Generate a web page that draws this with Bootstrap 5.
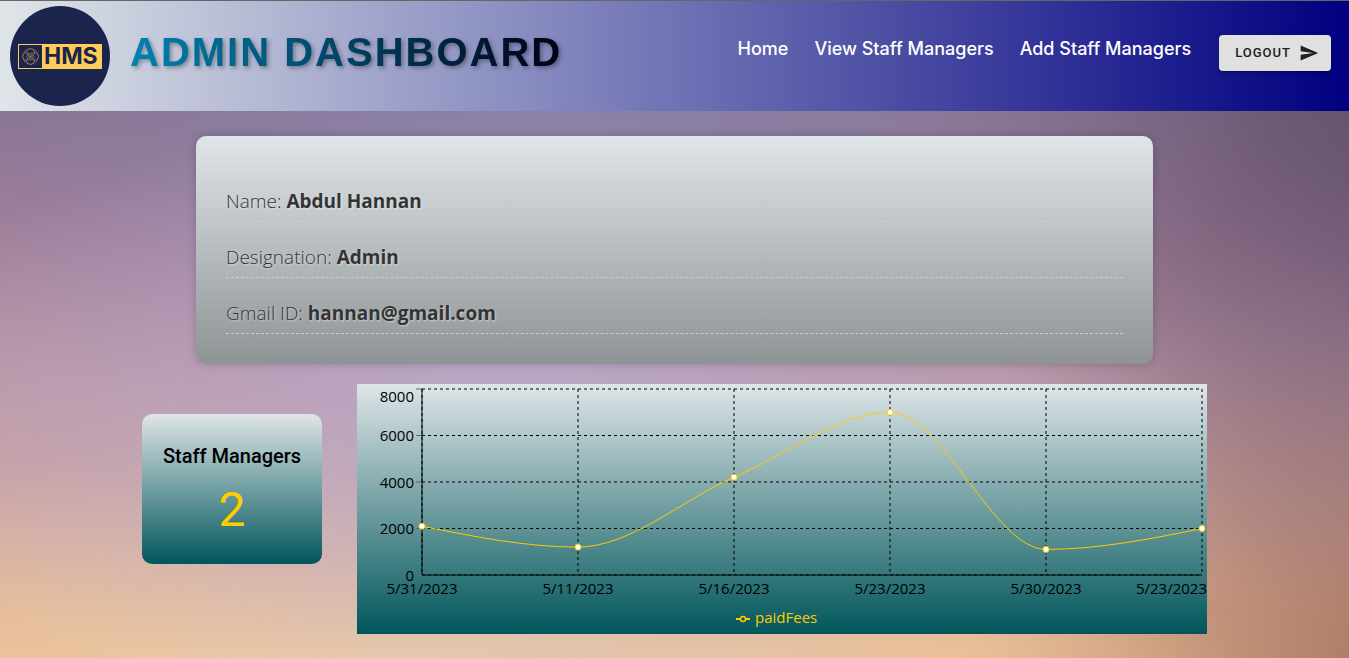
<!DOCTYPE html>
<html lang="en">
<head>
<meta charset="utf-8">
<meta name="viewport" content="width=device-width, initial-scale=1">
<title>Admin Dashboard</title>
<link href="https://cdn.jsdelivr.net/npm/bootstrap@5.3.0/dist/css/bootstrap.min.css" rel="stylesheet">
<style>
  body {
    min-height: 100vh;
    font-family: "Open Sans", "Noto Sans", sans-serif;
    background:
      radial-gradient(ellipse 50% 45% at 38% 62%, #bba9c6 0%, #bba9c600 100%),
      radial-gradient(ellipse 60% 40% at 33% 106%, #eccdaa 10%, #eccdaa00 100%),
      radial-gradient(ellipse 55% 60% at 40% 10%, #8b82ab 0%, #8b82ab00 100%),
      radial-gradient(ellipse 36% 80% at 104% 14%, #62506b 0%, #62506b00 100%),
      radial-gradient(ellipse 32% 55% at 104% 100%, #a87767 0%, #a8776700 100%),
      linear-gradient(#87708b 15%, #a78199 38%, #be98a5 60%, #d5ab9f 82%, #e8b78c 100%);
  }
  .topbar {
    height: 111px;
    border-top: 1px solid #666;
    background: linear-gradient(to right, #dfe5e8, #000080);
  }
  .brand { margin: 5px 20px 0 10px; }
  .site-title {
    margin: 27px 0 0;
    font: 700 40px/48px "Liberation Sans", Arial, sans-serif;
    letter-spacing: 2px;
    background: linear-gradient(to right, #0083b0, #000014);
    -webkit-background-clip: text;
    background-clip: text;
    color: transparent;
    filter: drop-shadow(2px 2px 2px rgba(0, 0, 0, .35));
  }
  .topbar .nav { margin-top: 36px; }
  .topbar .nav-link { font: 500 18px/24px Inter, sans-serif; color: #fff; padding: 0 13px; }
  .btn-logout {
    --bs-btn-bg: #e0e0e0; --bs-btn-hover-bg: #d5d5d5; --bs-btn-color: #202020;
    margin: 34px 18px 0 15px;
    padding: 0 12px 0 16px;
    font: 500 13px/24px Roboto, sans-serif;
    letter-spacing: 1px;
    height: 36px;
    border: 0;
    border-radius: 4px;
    box-shadow: 0 3px 1px -2px rgba(0,0,0,.2), 0 2px 2px rgba(0,0,0,.14), 0 1px 5px rgba(0,0,0,.12);
  }
  .profile {
    max-width: 957px;
    margin-top: 25px;
    padding: 48px 30px 30px;
    border-radius: 10px;
    background: linear-gradient(#dfe5e8, #8e9395);
    box-shadow: 0 0 10px rgba(0, 0, 0, .2);
    color: #333;
    font-size: 19px;
    line-height: 35px;
    text-shadow: 1px 1px 2px rgba(255, 255, 255, .5);
  }
  .profile p { font-weight: 300; border-bottom: 1px dashed #ccc; padding-bottom: 2px; margin-bottom: 18px; }
  .profile p:last-child { margin-bottom: 0; }
  .profile b { font-weight: 700; }
  .stats { margin-top: 20px; gap: 35px; }
  .fade-teal { background: linear-gradient(#dfe5e8, #00565b); }
  .stat { width: 180px; height: 150px; margin-top: 30px; padding-top: 30px; border-radius: 10px; color: #000; font-family: Roboto, sans-serif; }
  .stat h2 { font-size: 20px; line-height: 24px; font-weight: 500; margin: 0 0 18px; }
  .stat output { color: #ffcc00; font-size: 48px; line-height: 48px; }
  .chart { max-width: 850px; }
  .chart text { font-size: 15px; fill: #000; }
  .chart .series { fill: #ffcc00; }
</style>
</head>
<body>
<header class="topbar d-flex align-items-start">
  <a href="#" class="brand flex-shrink-0" aria-label="HMS">
    <svg class="d-block" width="100" height="100" viewBox="0 0 100 100">
      <circle cx="50" cy="50" r="50" fill="#1b244c"/>
      <path d="M8 38h84v25H8z" fill="#ffcc57"/>
      <path d="M9 39h23v23H9z" fill="#1b244c"/>
      <g fill="none" stroke="#a58c55" stroke-width=".6">
        <circle cx="20.500" cy="46.500" r="4"/><circle cx="20.500" cy="54.500" r="4"/>
        <circle cx="16.500" cy="50.500" r="4"/><circle cx="24.500" cy="50.500" r="4"/>
        <path d="m20.500 42.500 5.600 2.400 2.400 5.600-2.400 5.600-5.600 2.400-5.600-2.400-2.400-5.600 2.400-5.600z"/>
        <path d="m20.500 46.500 4 4-4 4-4-4z"/>
      </g>
      <text x="34" y="58" font-family="Inter, sans-serif" font-weight="700" font-size="23" fill="#1b244c">HMS</text>
    </svg>
  </a>
  <h1 class="site-title text-nowrap">ADMIN DASHBOARD</h1>
  <nav class="nav flex-nowrap text-nowrap ms-auto">
    <a class="nav-link" href="#">Home</a>
    <a class="nav-link" href="#">View Staff Managers</a>
    <a class="nav-link" href="#">Add Staff Managers</a>
  </nav>
  <button type="button" class="btn btn-logout d-flex align-items-center gap-2">LOGOUT
    <svg width="20" height="20" viewBox="0 0 24 24" fill="currentColor"><path d="M2.010 21 23 12 2.010 3 2 10l15 2-15 2z"/></svg>
  </button>
</header>
<main class="px-3">
  <section class="profile mx-auto">
    <p>Name: <b>Abdul Hannan</b></p>
    <p>Designation: <b>Admin</b></p>
    <p>Gmail ID: <b>hannan@gmail.com</b></p>
  </section>
  <div class="stats d-flex justify-content-center">
    <section class="stat fade-teal text-center flex-shrink-0">
      <h2>Staff Managers</h2>
      <output>2</output>
    </section>
    <figure class="chart fade-teal flex-grow-1 mb-4">
      <svg class="d-block w-100" viewBox="0 0 850 250" role="img" aria-label="paidFees by date">
        <g stroke="#000" stroke-dasharray="3 3">
          <path d="M65 5H845M65 51.500H845M65 98H845M65 144.500H845M65 191H845"/>
          <path d="M65 5V191M221 5V191M377 5V191M533 5V191M689 5V191M845 5V191"/>
        </g>
        <path d="M59 5h6M59 51.500h6M59 98h6M59 144.500h6M59 191h6M65 191v6M221 191v6M377 191v6M533 191v6M689 191v6M845 191v6" fill="none" stroke="#666"/>
        <path d="M65 5V191H845" fill="none" stroke="#000"/>
        <g text-anchor="end">
          <text x="57" y="18">8000</text><text x="57" y="57">6000</text><text x="57" y="104">4000</text>
          <text x="57" y="150">2000</text><text x="57" y="197">0</text>
          <text x="850" y="210">5/23/2023</text>
        </g>
        <g text-anchor="middle">
          <text x="65" y="210">5/31/2023</text><text x="221" y="210">5/11/2023</text><text x="377" y="210">5/16/2023</text>
          <text x="533" y="210">5/23/2023</text><text x="689" y="210">5/30/2023</text>
        </g>
        <path d="M65 142.200C117 152.600 169 163.100 221 163.100C273 163.100 325 115.800 377 93.300C429 70.900 481 28.300 533 28.300C585 28.300 637 165.400 689 165.400C741 165.400 793 155 845 144.500" fill="none" stroke="#ffcc00"/>
        <g fill="#fff" stroke="#ffcc00">
          <circle cx="65" cy="142.200" r="3"/><circle cx="221" cy="163.100" r="3"/><circle cx="377" cy="93.300" r="3"/>
          <circle cx="533" cy="28.300" r="3"/><circle cx="689" cy="165.400" r="3"/><circle cx="845" cy="144.500" r="3"/>
        </g>
        <path d="M379 235h4.500M388.500 235h4.500" stroke="#ffcc00" stroke-width="2"/>
        <circle cx="386" cy="235" r="2.500" fill="none" stroke="#ffcc00" stroke-width="1.500"/>
        <text class="series" x="398" y="239">paidFees</text>
      </svg>
    </figure>
  </div>
</main>
<script src="https://cdn.jsdelivr.net/npm/bootstrap@5.3.0/dist/js/bootstrap.bundle.min.js"></script>
</body>
</html>
